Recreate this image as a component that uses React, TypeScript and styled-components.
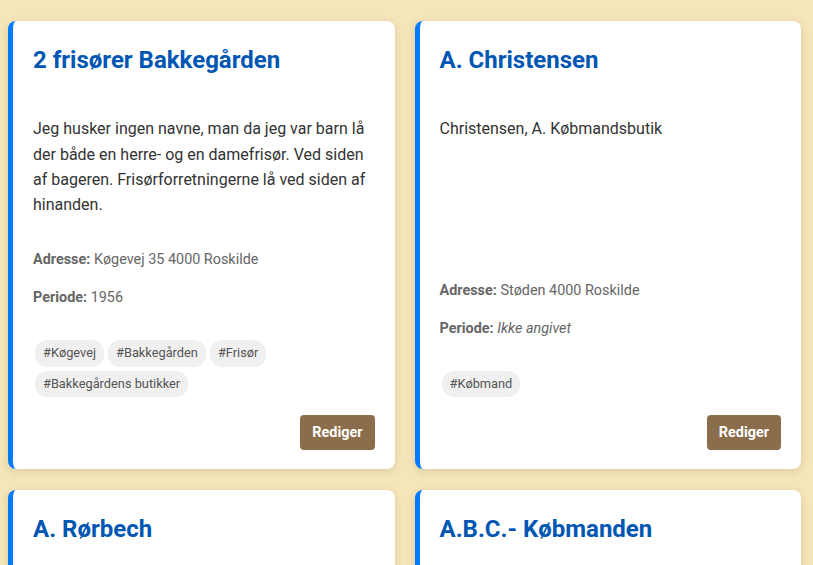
import React from "react";
import styled, { createGlobalStyle } from "styled-components";

const GlobalStyle = createGlobalStyle`
  html, body {
    margin: 0;
    padding: 0;
    background: #f5e5b8;
    font-family: Roboto, "Noto Sans", "Liberation Sans", sans-serif;
    line-height: 1.6;
    color: #333;
  }
  * { box-sizing: border-box; }
`;

const Page = styled.div`
  padding: 21px 0 20px 8px;
`;

const Grid = styled.div`
  width: 793px;
  display: grid;
  grid-template-columns: 1fr 1fr;
  gap: 21px 20px;
`;

const Card = styled.article`
  background: #fff;
  border-left: 5px solid #007bff;
  border-radius: 8px;
  box-shadow: 0 2px 8px rgba(0, 0, 0, 0.12);
  padding: 20px 20px 19px 20px;
  display: flex;
  flex-direction: column;
`;

const Title = styled.h2`
  margin: 0 0 37px;
  font-size: 24px;
  font-weight: 700;
  line-height: 38.4px;
  color: #0056b3;
`;

const Description = styled.p`
  flex: 1;
  margin: 0 0 30.7px;
  font-size: 16px;
  line-height: 25.3px;
  color: #333;
`;

const Meta = styled.div`
  display: flex;
  flex-direction: column;
  gap: 15px;
`;

const MetaRow = styled.p`
  margin: 0;
  font-size: 14.4px;
  line-height: 23px;
  color: #666;
`;

const Label = styled.strong`
  font-weight: 700;
`;

const Muted = styled.em`
  font-style: italic;
`;

const Tags = styled.div`
  display: flex;
  flex-wrap: wrap;
  margin-top: 29px;
`;

const Tag = styled.span`
  display: inline-block;
  margin: 2px;
  padding: 3px 8px;
  font-size: 12.8px;
  line-height: 20.5px;
  background: #f0f0f0;
  color: #555;
  border-radius: 12px;
`;

const Actions = styled.div`
  display: flex;
  justify-content: flex-end;
  margin-top: 16px;
`;

const EditButton = styled.button`
  font-family: Roboto, "Noto Sans", "Liberation Sans", sans-serif;
  font-size: 14.4px;
  font-weight: 700;
  line-height: 23px;
  padding: 6px 12px;
  border: none;
  border-radius: 4px;
  background: #8a6d4a;
  color: #fff;
  cursor: pointer;
`;

type Entry = {
  title: string;
  description: string;
  address: string;
  period?: string;
  tags: string[];
};

const entries: Entry[] = [
  {
    title: "2 frisører Bakkegården",
    description:
      "Jeg husker ingen navne, man da jeg var barn lå der både en herre- og en damefrisør. Ved siden af bageren. Frisørforretningerne lå ved siden af hinanden.",
    address: "Køgevej 35 4000 Roskilde",
    period: "1956",
    tags: ["#Køgevej", "#Bakkegården", "#Frisør", "#Bakkegårdens butikker"],
  },
  {
    title: "A. Christensen",
    description: "Christensen, A. Købmandsbutik",
    address: "Støden 4000 Roskilde",
    tags: ["#Købmand"],
  },
  {
    title: "A. Rørbech",
    description: "Rørbech, A. Manufakturhandel",
    address: "Algade 4000 Roskilde",
    tags: ["#Manufaktur"],
  },
  {
    title: "A.B.C.- Købmanden",
    description: "A.B.C. Købmanden",
    address: "Roskilde",
    tags: ["#Købmand"],
  },
];

export default function App() {
  return (
    <>
      <GlobalStyle />
      <Page>
        <Grid>
          {entries.map((e) => (
            <Card key={e.title}>
              <Title>{e.title}</Title>
              <Description>{e.description}</Description>
              <Meta>
                <MetaRow>
                  <Label>Adresse:</Label> {e.address}
                </MetaRow>
                <MetaRow>
                  <Label>Periode:</Label>{" "}
                  {e.period ? e.period : <Muted>Ikke angivet</Muted>}
                </MetaRow>
              </Meta>
              <Tags>
                {e.tags.map((t) => (
                  <Tag key={t}>{t}</Tag>
                ))}
              </Tags>
              <Actions>
                <EditButton>Rediger</EditButton>
              </Actions>
            </Card>
          ))}
        </Grid>
      </Page>
    </>
  );
}
